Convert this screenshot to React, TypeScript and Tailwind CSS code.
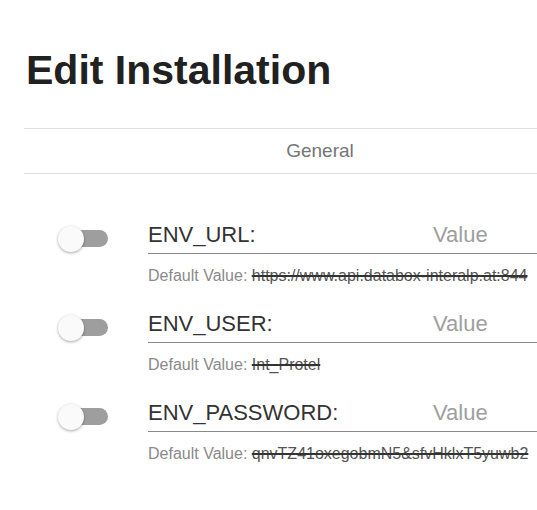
import React from "react";

const rows = [
  { name: "ENV_URL:", def: "https://www.api.databox-interalp.at:844" },
  { name: "ENV_USER:", def: "Int_Protel" },
  { name: "ENV_PASSWORD:", def: "qnvTZ41oxegobmN5&sfvHklxT5yuwb2" },
];

function Toggle() {
  return (
    <div className="relative w-[50px] h-[26px] mt-[7px] shrink-0">
      <div className="absolute left-[4px] top-[4px] w-[46px] h-[17px] rounded-full bg-[#9e9e9e]" />
      <div className="absolute left-0 top-0 w-[26px] h-[26px] rounded-full bg-[#fafafa] shadow-[0_1px_3px_rgba(0,0,0,0.35)]" />
    </div>
  );
}

export default function App() {
  return (
    <div
      className="w-[537px] h-[510px] overflow-hidden bg-white"
      style={{ fontFamily: '"Liberation Sans", Arial, sans-serif' }}
    >
      <div className="w-[592px] ml-[24px]">
        <h1 className="text-[41px] leading-[40px] font-bold text-[#212121] pt-[50px] pl-[2px]">
          Edit Installation
        </h1>
        <div className="mt-[38px] h-[46px] border-y border-[#e0e0e0] flex items-center justify-center">
          <span className="text-[19px] text-[#757575]">General</span>
        </div>
        <div className="mt-[45px] flex flex-col gap-[20px]">
          {rows.map((r) => (
            <div key={r.name} className="flex items-start">
              <div className="w-[124px] pl-[34px] shrink-0">
                <Toggle />
              </div>
              <div className="flex-1 min-w-0">
                <div className="flex items-start h-[35px] border-b border-[#8a8a8a]">
                  <span className="w-[285px] text-[22px] leading-[32px] text-[#333333]">
                    {r.name}
                  </span>
                  <span className="text-[22px] leading-[32px] text-[#9e9e9e]">Value</span>
                </div>
                <div className="mt-[10px] text-[16px] leading-[24px] text-[#8a8a8a] whitespace-nowrap">
                  Default Value:{" "}
                  <span className="text-[#555] line-through decoration-[#333] decoration-2">
                    {r.def}
                  </span>
                </div>
              </div>
            </div>
          ))}
        </div>
      </div>
    </div>
  );
}
